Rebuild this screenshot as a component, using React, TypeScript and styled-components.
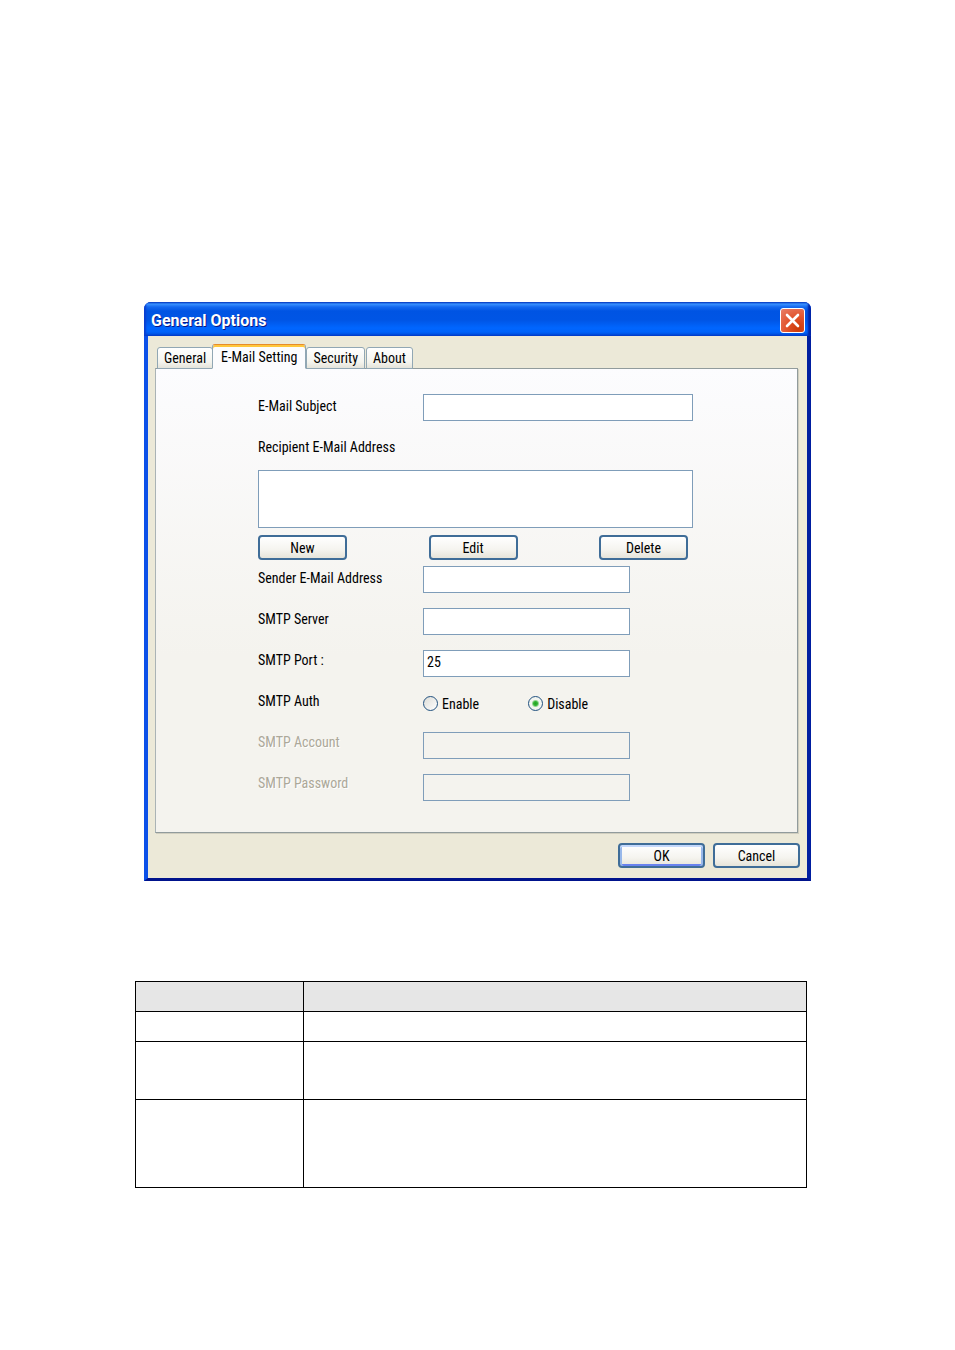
import React, { useState } from "react";
import styled, { createGlobalStyle, css } from "styled-components";

const GlobalStyle = createGlobalStyle`
  *, *::before, *::after { box-sizing: border-box; }
  body {
    margin: 0;
    background: #fff;
    color: #000;
    font-family: "Roboto Condensed", Roboto, "Liberation Sans", sans-serif;
    font-size: 14px;
  }
`;

const Page = styled.main`
  padding: 302px 148px 162px 135px;
`;

const Dialog = styled.section`
  margin: 0 -4px 100px 9px;
  border-radius: 7px 7px 0 0;
  background: #0831d9;
  overflow: hidden;
`;

const TitleBar = styled.header`
  display: flex;
  align-items: center;
  justify-content: space-between;
  height: 34px;
  padding: 3px 6px 0 7px;
  background: linear-gradient(
    #0a48c8 0,
    #3a92ff 2px,
    #1468f0 5px,
    #0054e3 9px,
    #0055e5 18px,
    #0066ff 26px,
    #0062fa 30px,
    #0046d0 34px
  );
  box-shadow: inset 2px 0 2px #0a3fd0, inset -3px 0 2px #0024a8;
`;

const Title = styled.h1`
  margin: 0;
  color: #fff;
  font: bold 16px/20px Roboto, "Noto Sans", sans-serif;
  text-shadow: 1px 1px 0 #0a1883;
`;

const CloseButton = styled.button`
  display: grid;
  place-items: center;
  width: 25px;
  height: 25px;
  padding: 0;
  border: 1px solid #fff;
  border-radius: 3px;
  background: radial-gradient(circle at 75% 85%, #cc3a08 0, #e2532c 45%, #e8806a 100%);
`;

const Body = styled.div`
  padding: 8px 7px 10px;
  border: solid;
  border-width: 0 4px 3px;
  border-color: #0831d9 #001ea0 #00138c #0c50e8;
  background: #ece9d8;
`;

const TabList = styled.div`
  display: flex;
  align-items: flex-end;
  height: 25px;
  margin: 0 0 -1px 2px;
`;

const Tab = styled.button<{ $active?: boolean }>`
  height: 22px;
  padding: 0 6px;
  border: 1px solid #91a7b4;
  border-radius: 3px 3px 0 0;
  background: linear-gradient(#fff, #f4f4ee 70%, #e4e3da);
  color: #000;
  font: inherit;
  line-height: 20px;
  white-space: nowrap;

  & + & {
    margin-left: 1px;
  }

  ${(p) =>
    p.$active &&
    css`
      height: 25px;
      && {
        margin: 0 -1px 0 -1px;
      }
      padding: 0 8px;
      border-color: #e68b2c #91a7b4 #fcfcfe;
      background: #fcfcfe;
      box-shadow: inset 0 2px 0 #ffc73c;
      position: relative;
      line-height: 22px;
    `}
`;

const Panel = styled.form`
  margin-right: 2px;
  padding: 25px 104px 31px 102px;
  border: 1px solid #919b9c;
  border-left-color: #aab3b5;
  background: linear-gradient(#fcfcfe, #f4f3ee 62%, #f4f3ee);
  box-shadow: 1px 1px 0 #d0cebf;
`;

const SubjectRow = styled.div`
  display: grid;
  grid-template-columns: 165px 1fr;
  align-items: start;
`;

const Label = styled.label<{ $disabled?: boolean }>`
  display: block;
  height: 24px;
  line-height: 24px;
  white-space: nowrap;
  ${(p) => p.$disabled && "color: #aca899; text-shadow: 1px 1px 0 #fff;"}
`;

const TextField = styled.input`
  display: block;
  width: 100%;
  height: 27px;
  padding: 0 4px 4px 3px;
  border: 1px solid #7f9db9;
  border-radius: 0;
  background: #fff;
  color: #000;
  font: inherit;

  &:disabled {
    background: #f4f3ee;
  }
`;

const Recipients = styled.div`
  margin-top: 14px;
`;

const RecipientList = styled.select`
  display: block;
  width: 100%;
  height: 58px;
  margin-top: 11px;
  border: 1px solid #7f9db9;
  border-radius: 0;
  background: #fff;
`;

const ListActions = styled.div`
  display: flex;
  justify-content: space-between;
  margin: 7px 5px 6px 0;
`;

const Button = styled.button<{ $default?: boolean; $width?: number }>`
  width: ${(p) => p.$width ?? 89}px;
  height: 25px;
  padding: 0;
  border: 2px solid #3f6d98;
  border-radius: 4px;
  background: linear-gradient(#fff, #f5f4ef 60%, #e6e4da);
  color: #000;
  font: inherit;
  line-height: 20px;
  ${(p) => p.$default && "box-shadow: inset 0 2px 0 #c4d8fb, inset 2px 0 0 #98b8ea, inset -2px 0 0 #98b8ea, inset 0 -2px 0 #6982ee;"}
`;

const ServerSettings = styled.div`
  display: grid;
  grid-template-columns: 165px 1fr;
  padding-right: 63px;
`;

const LabelColumn = styled.div`
  display: flex;
  flex-direction: column;
  gap: 17px;
`;

const FieldColumn = styled.div`
  display: flex;
  flex-direction: column;
  gap: 15px;
`;

const RadioRow = styled.div`
  display: flex;
  gap: 49px;
  height: 25px;
`;

const RadioLabel = styled.label`
  display: flex;
  align-items: center;
  gap: 4px;
  height: 23px;
`;

const Radio = styled.input`
  appearance: none;
  width: 15px;
  height: 15px;
  margin: 0;
  border: 1px solid #21517f;
  border-radius: 50%;
  background: linear-gradient(135deg, #dcdcd7, #fff);

  &:checked {
    background: radial-gradient(circle, #21a121 0, #35b535 2px, #f2f5f0 4px);
  }
`;

const Footer = styled.footer`
  display: flex;
  justify-content: flex-end;
  gap: 8px;
  margin-top: 10px;
`;

const Descriptions = styled.table`
  width: 100%;
  border-collapse: collapse;
  table-layout: fixed;

  th,
  td {
    padding: 0;
    border: 1px solid #000;
  }

  th {
    background: #e6e6e6;
  }
`;

const NameColumn = styled.col`
  width: 25%;
`;

const Row = styled.tr<{ $height: number }>`
  height: ${(p) => p.$height}px;
`;

const tabs = ["General", "E-Mail Setting", "Security", "About"];
const rowHeights = [30, 58, 88];

export default function App() {
  const [auth, setAuth] = useState("disable");
  const locked = auth === "disable";

  return (
    <>
      <GlobalStyle />
      <Page>
        <Dialog>
          <TitleBar>
            <Title>General Options</Title>
            <CloseButton type="button" aria-label="Close">
              <svg width="15" height="15" viewBox="0 0 15 15" aria-hidden="true">
                <path d="M2 2L13 13M13 2L2 13" stroke="#fff" strokeWidth="2.6" strokeLinecap="round" />
              </svg>
            </CloseButton>
          </TitleBar>
          <Body>
            <TabList role="tablist">
              {tabs.map((name) => (
                <Tab
                  key={name}
                  type="button"
                  role="tab"
                  aria-selected={name === "E-Mail Setting"}
                  $active={name === "E-Mail Setting"}
                >
                  {name}
                </Tab>
              ))}
            </TabList>
            <Panel>
              <SubjectRow>
                <Label htmlFor="subject">E-Mail Subject</Label>
                <TextField id="subject" />
              </SubjectRow>
              <Recipients>
                <Label htmlFor="recipients">Recipient E-Mail Address</Label>
                <RecipientList id="recipients" size={3} />
              </Recipients>
              <ListActions>
                <Button type="button">New</Button>
                <Button type="button">Edit</Button>
                <Button type="button">Delete</Button>
              </ListActions>
              <ServerSettings>
                <LabelColumn>
                  <Label htmlFor="sender">Sender E-Mail Address</Label>
                  <Label htmlFor="server">SMTP Server</Label>
                  <Label htmlFor="port">SMTP Port :</Label>
                  <Label as="span" id="auth-label">SMTP Auth</Label>
                  <Label htmlFor="account" $disabled={locked}>SMTP Account</Label>
                  <Label htmlFor="password" $disabled={locked}>SMTP Password</Label>
                </LabelColumn>
                <FieldColumn>
                  <TextField id="sender" />
                  <TextField id="server" />
                  <TextField id="port" defaultValue="25" />
                  <RadioRow role="radiogroup" aria-labelledby="auth-label">
                    <RadioLabel>
                      <Radio type="radio" name="auth" checked={!locked} onChange={() => setAuth("enable")} />
                      Enable
                    </RadioLabel>
                    <RadioLabel>
                      <Radio type="radio" name="auth" checked={locked} onChange={() => setAuth("disable")} />
                      Disable
                    </RadioLabel>
                  </RadioRow>
                  <TextField id="account" disabled={locked} />
                  <TextField id="password" type="password" disabled={locked} />
                </FieldColumn>
              </ServerSettings>
            </Panel>
            <Footer>
              <Button type="button" $default $width={87}>OK</Button>
              <Button type="button" $width={87}>Cancel</Button>
            </Footer>
          </Body>
        </Dialog>
        <Descriptions>
          <colgroup>
            <NameColumn />
            <col />
          </colgroup>
          <thead>
            <Row $height={30}>
              <th />
              <th />
            </Row>
          </thead>
          <tbody>
            {rowHeights.map((height) => (
              <Row key={height} $height={height}>
                <td />
                <td />
              </Row>
            ))}
          </tbody>
        </Descriptions>
      </Page>
    </>
  );
}
